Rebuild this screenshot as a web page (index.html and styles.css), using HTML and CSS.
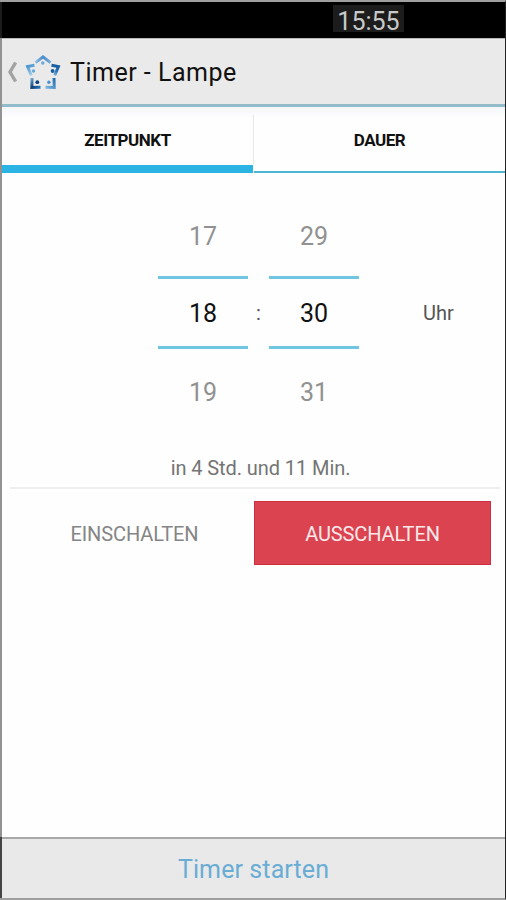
FILE: index.html
```html
<!DOCTYPE html>
<html lang="de">
<head>
<meta charset="utf-8">
<title>Timer - Lampe</title>
<link rel="stylesheet" href="styles.css">
</head>
<body>
<div class="screen">
  <div class="status"><span class="clock">15:55</span></div>
  <header class="header">
    <svg class="back" width="10" height="22" viewBox="0 0 10 22"><path d="M8.600 1.500 3 11l5.600 9.500" fill="none" stroke="#a2a2a2" stroke-width="3.400"/></svg>
    <svg class="logo" width="36" height="36" viewBox="0 0 36 36">
      <defs>
        <linearGradient id="top" gradientUnits="userSpaceOnUse" x1="9" y1="9" x2="27" y2="9"><stop offset="0" stop-color="#a5c9e9"/><stop offset=".5" stop-color="#488bc9"/><stop offset="1" stop-color="#7fb2df"/></linearGradient>
        <linearGradient id="left" gradientUnits="userSpaceOnUse" x1="2" y1="11" x2="8" y2="23"><stop offset="0" stop-color="#3d90cc"/><stop offset="1" stop-color="#b9ddf2"/></linearGradient>
        <linearGradient id="right" gradientUnits="userSpaceOnUse" x1="32" y1="11" x2="29" y2="23"><stop offset="0" stop-color="#155a9e"/><stop offset=".5" stop-color="#2876b7"/><stop offset="1" stop-color="#a5cdea"/></linearGradient>
        <linearGradient id="bottomLeft" gradientUnits="userSpaceOnUse" x1="6" y1="23" x2="15" y2="34"><stop offset="0" stop-color="#7fbde3"/><stop offset=".6" stop-color="#103e78"/><stop offset="1" stop-color="#2879bb"/></linearGradient>
        <linearGradient id="bottomRight" gradientUnits="userSpaceOnUse" x1="20" y1="34" x2="30" y2="24"><stop offset="0" stop-color="#84bbe3"/><stop offset="1" stop-color="#1c6cb1"/></linearGradient>
      </defs>
      <g fill="none" stroke-width="3">
        <path d="M10.500 8.600 18 2.800l7.500 5.800" stroke="url(#top)"/>
        <path d="M9.500 11.200 2.600 12.600 6.300 21.500" stroke="url(#left)"/>
        <path d="M26.500 11.200 33.400 12.600 29.700 21.500" stroke="url(#right)"/>
        <path d="M7 24 6.800 33.500 15.500 33.200" stroke="url(#bottomLeft)"/>
        <path d="M29 24 29.200 33.500 20.500 33.200" stroke="url(#bottomRight)"/>
      </g>
      <circle cx="17.800" cy="9" r="1.700" fill="#6ca7da"/>
      <circle cx="8.500" cy="17" r="1.700" fill="#64a8dc"/>
      <circle cx="27.600" cy="17" r="1.900" fill="#195b9e"/>
      <circle cx="12.300" cy="28.200" r="1.900" fill="#103f7b"/>
      <circle cx="23.900" cy="28.200" r="1.700" fill="#4a91ce"/>
    </svg>
    <h1 class="title">Timer - Lampe</h1>
  </header>
  <nav class="tabs">
    <div class="tab active"><span>ZEITPUNKT</span></div>
    <div class="divider"></div>
    <div class="tab"><span>DAUER</span></div>
  </nav>
  <main class="content">
    <div class="picker">
      <div class="wheel"><span>17</span><strong>18</strong><span>19</span></div>
      <div class="colon">:</div>
      <div class="wheel"><span>29</span><strong>30</strong><span>31</span></div>
      <div class="unit">Uhr</div>
    </div>
    <p class="remaining"><span>in 4 Std. und 11 Min.</span></p>
    <div class="choices">
      <div class="choice">EINSCHALTEN</div>
      <div class="choice selected">AUSSCHALTEN</div>
    </div>
  </main>
  <footer class="footer">Timer starten</footer>
</div>
</body>
</html>
```
FILE: styles.css
```css
* { box-sizing: border-box; }
body { margin: 0; background: #fff; font-family: Roboto, sans-serif; }
.screen {
  display: flex;
  flex-direction: column;
  width: 506px;
  height: 900px;
  overflow: hidden;
  padding-left: 2px;
  background: linear-gradient(#1c1c1c 36px, #929292 36px, #929292 835px, #444 835px) 0 0 / 2px 100% no-repeat, #fefefe;
  border-top: 2px solid #a0a0a0;
  border-right: 1px solid #222;
  border-bottom: 2px solid #9e9e9e;
}
.status { height: 36px; background: #000; padding: 3px 0 0 331px; }
.clock {
  display: block;
  width: 71px;
  height: 27px;
  background: #1c1c1c;
  color: #c9c9c9;
  font-size: 25px;
  line-height: 33px;
  text-align: center;
}
.header {
  display: flex;
  align-items: center;
  height: 69px;
  padding: 0 0 0 5px;
  background: #eaeaea;
  border-top: 1px solid #bbb;
  border-bottom: 3px solid #93bccb;
}
.back { margin-right: 8px; }
.logo { margin-right: 9px; }
.title { margin: 0; padding-top: 3px; font-size: 25px; font-weight: 400; color: #111; letter-spacing: .5px; line-height: 30px; }
.tabs { display: flex; height: 66px; background: linear-gradient(#f5f6f9, #fefefe 12px); }
.divider { width: 1px; height: 50px; margin-top: 8px; background: #e9e9e9; }
.tab {
  display: flex;
  align-items: center;
  justify-content: center;
  flex: 1;
  height: 66px;
  padding-top: 2px;
  border-bottom: 2px solid #4fb5d5;
  font-size: 17px;
  font-weight: 700;
  letter-spacing: -.45px;
  color: #111;
}
.tab.active { flex: 0 0 251px; border-bottom: 8px solid #2bb3e3; padding-top: 8px; }
.content { flex: 1; }
.picker {
  display: grid;
  grid-template-columns: 90px 21px 90px 1fr;
  height: 257px;
  padding: 24px 0 0 156px;
}
.wheel { display: grid; grid-template-rows: 79px 73px 84px; align-content: start; text-align: center; font-size: 25px; color: #919191; }
.wheel span { display: flex; align-items: center; justify-content: center; }
.wheel span:last-child { padding-top: 2px; }
.wheel strong {
  display: flex;
  align-items: center;
  justify-content: center;
  padding-top: 2px;
  border-top: 3px solid #70c5e0;
  border-bottom: 3px solid #70c5e0;
  font-weight: 400;
  color: #111;
}
.colon, .unit { margin-top: 79px; height: 73px; line-height: 75px; font-size: 20px; color: #555; text-align: center; }
.unit { padding-left: 13px; }
.remaining { height: 59px; margin: 0 5px 0 8px; padding: 24px 0 0 11px; border-bottom: 2px solid #eee; font-size: 20px; letter-spacing: -.08px; line-height: 28px; color: #747474; text-align: center; }
.choices { display: grid; grid-template-columns: 239px 238px; height: 76px; padding: 12px 0 0 13px; }
.choice { display: flex; align-items: center; justify-content: center; height: 64px; padding-top: 2px; font-size: 20px; letter-spacing: -.1px; color: #858585; }
.choice.selected { width: 237px; background: #da434f; border: 1px solid #cc3040; color: #fce9eb; }
.footer {
  display: flex;
  align-items: center;
  justify-content: center;
  height: 61px;
  padding-top: 2px;
  background: #e9e9e9;
  border-top: 2px solid #a8a8a8;
  font-size: 25px;
  letter-spacing: .1px;
  color: #69add5;
}
```
